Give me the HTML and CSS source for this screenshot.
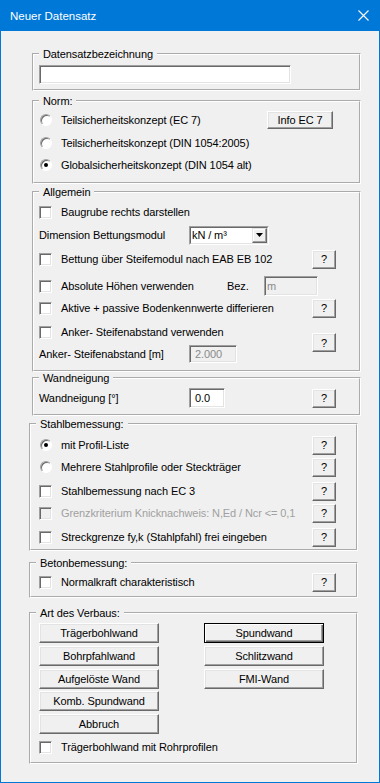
FILE: index.html
```html
<!DOCTYPE html>
<html lang="de">
<head>
<meta charset="utf-8">
<title>Neuer Datensatz</title>
<link rel="stylesheet" href="styles.css">
</head>
<body>
<div class="window">
  <div class="titlebar">
    <span class="title">Neuer Datensatz</span>
    <svg class="close" width="11" height="11" viewBox="0 0 11 11"><path d="M0.5 0.5L10.5 10.5M10.5 0.5L0.5 10.5" stroke="#fff" stroke-width="1.1" fill="none"/></svg>
  </div>
  <div class="content">
    <fieldset class="group g1">
      <legend>Datensatzbezeichnung</legend>
      <div class="input name"></div>
    </fieldset>

    <fieldset class="group g2">
      <legend>Norm:</legend>
      <div class="row h22"><span class="rb"></span><span>Teilsicherheitskonzept (EC 7)</span><button class="btn info">Info EC 7</button></div>
      <div class="row h23"><span class="rb"></span><span>Teilsicherheitskonzept (DIN 1054:2005)</span></div>
      <div class="row h22"><span class="rb on"></span><span>Globalsicherheitskonzept (DIN 1054 alt)</span></div>
    </fieldset>

    <fieldset class="group g3">
      <legend>Allgemein</legend>
      <div class="row"><span class="cb"></span><span>Baugrube rechts darstellen</span></div>
      <div class="row mt1"><span class="fixlbl">Dimension Bettungsmodul</span>
        <div class="select"><div class="select-in"><span class="sel-text">kN / m³</span><span class="arrow"><svg width="7" height="4" viewBox="0 0 7 4"><path d="M0 0H7L3.5 4Z" fill="#000"/></svg></span></div></div>
      </div>
      <div class="row mt2"><span class="cb"></span><span>Bettung über Steifemodul nach EAB EB 102</span><button class="btn q">?</button></div>
      <div class="row mt5"><span class="cb"></span><span class="lbl-abs">Absolute Höhen verwenden</span><span class="bez">Bez.</span><div class="input dis bezin">m</div></div>
      <div class="row"><span class="cb"></span><span>Aktive + passive Bodenkennwerte differieren</span><button class="btn q">?</button></div>
      <div class="anker">
        <div class="anker-rows">
          <div class="row"><span class="cb"></span><span>Anker- Steifenabstand verwenden</span></div>
          <div class="row h21"><span class="fixlbl">Anker- Steifenabstand [m]</span><div class="input dis abst">2.000</div></div>
        </div>
        <button class="btn q">?</button>
      </div>
    </fieldset>

    <fieldset class="group g4">
      <legend>Wandneigung</legend>
      <div class="row"><span class="fixlbl">Wandneigung [°]</span><div class="input neig">0.0</div><button class="btn q">?</button></div>
    </fieldset>

    <fieldset class="group shifted g5">
      <legend>Stahlbemessung:</legend>
      <div class="row"><span class="rb on"></span><span>mit Profil-Liste</span><button class="btn q">?</button></div>
      <div class="row"><span class="rb"></span><span>Mehrere Stahlprofile oder Steckträger</span><button class="btn q">?</button></div>
      <div class="row mt2"><span class="cb"></span><span>Stahlbemessung nach EC 3</span><button class="btn q">?</button></div>
      <div class="row"><span class="cb dis"></span><span class="distext">Grenzkriterium Knicknachweis: N,Ed / Ncr &lt;= 0,1</span><button class="btn q">?</button></div>
      <div class="row mt2"><span class="cb"></span><span>Streckgrenze fy,k (Stahlpfahl) frei eingeben</span><button class="btn q">?</button></div>
    </fieldset>

    <fieldset class="group shifted g6">
      <legend>Betonbemessung:</legend>
      <div class="row"><span class="cb"></span><span>Normalkraft charakteristisch</span><button class="btn q">?</button></div>
    </fieldset>

    <fieldset class="group shifted g7">
      <legend>Art des Verbaus:</legend>
      <div class="btngrid">
        <button class="btn">Trägerbohlwand</button>
        <button class="btn default">Spundwand</button>
        <button class="btn">Bohrpfahlwand</button>
        <button class="btn">Schlitzwand</button>
        <button class="btn">Aufgelöste Wand</button>
        <button class="btn">FMI-Wand</button>
        <button class="btn">Komb. Spundwand</button>
        <span></span>
        <button class="btn">Abbruch</button>
      </div>
      <div class="row mt2"><span class="cb"></span><span>Trägerbohlwand mit Rohrprofilen</span></div>
    </fieldset>
  </div>
</div>
</body>
</html>
```
FILE: styles.css
```css
html, body {
  margin: 0;
  padding: 0;
  background: #f0f0f0;
}
body {
  font-family: "Liberation Sans", Arial, sans-serif;
  font-size: 11px;
  color: #000;
}
.window {
  width: 380px;
  height: 783px;
  box-sizing: border-box;
  border: 1px solid #0078d7;
  border-top: 0;
  background: #f0f0f0;
  overflow: hidden;
}
.titlebar {
  height: 31px;
  background: #0078d7;
  display: flex;
  align-items: center;
  padding-left: 9px;
  color: #fff;
}
.title {
  font-size: 11.5px;
}
.close {
  margin-left: auto;
  margin-right: 10px;
}
.content {
  display: flex;
  flex-direction: column;
  letter-spacing: -0.1px;
}
.group {
  margin: 0 0 0 31px;
  width: 329px;
  box-sizing: border-box;
  min-width: 0;
  border: 2px groove #fff;
  padding: 0 23px 0 5px;
}
.group.shifted {
  margin-left: 28px;
  padding-left: 8px;
  padding-right: 20px;
}
legend {
  padding: 0 4px;
  line-height: 12px;
  height: 12px;
  font-size: 11px;
}
.shifted legend {
  margin-left: -3px;
}
.g1 { margin-top: 17px; padding-top: 5px; padding-bottom: 5px; }
.g2 { margin-top: 4px; padding-top: 2px; padding-bottom: 6px; }
.g3 { margin-top: 2px; padding-top: 3px; padding-bottom: 6px; }
.g4 { margin-top: 0; padding-top: 3px; padding-bottom: 5px; }
.g5 { margin-top: 2px; padding-top: 4px; padding-bottom: 1px; }
.g6 { margin-top: 6px; padding-top: 2px; padding-bottom: 3px; }
.g7 { margin-top: 9px; padding-top: 4px; padding-bottom: 4px; }

.row {
  display: flex;
  align-items: center;
  height: 22px;
  white-space: nowrap;
}
.row.h23 { height: 23px; }
.row.h21 { height: 21px; }
.mt1 { margin-top: 1px; }
.mt2 { margin-top: 2px; }
.mt5 { margin-top: 5px; }

.cb {
  flex: none;
  width: 13px;
  height: 13px;
  box-sizing: border-box;
  background: #fff;
  border: 1px solid;
  border-color: #a0a0a0 #fff #fff #a0a0a0;
  box-shadow: inset 1px 1px #696969, inset -1px -1px #e3e3e3;
  margin-right: 9px;
}
.cb.dis { background: #f0f0f0; }
.distext { color: #a0a0a0; }

.rb {
  flex: none;
  width: 12px;
  height: 12px;
  box-sizing: border-box;
  border-radius: 50%;
  margin-left: 1px;
  margin-right: 9px;
  background: #fff;
  border: 1px solid;
  border-color: #a0a0a0 #fff #fff #a0a0a0;
  box-shadow: inset 1px 1px #696969;
  display: flex;
  align-items: center;
  justify-content: center;
}
.rb.on::after {
  content: "";
  width: 4px;
  height: 4px;
  border-radius: 50%;
  background: #000;
}

.btn {
  box-sizing: border-box;
  background: #f0f0f0;
  border: 1px solid;
  border-color: #fff #696969 #696969 #fff;
  box-shadow: inset -1px -1px #a0a0a0, inset 1px 1px #e3e3e3;
  display: flex;
  align-items: center;
  justify-content: center;
  font: inherit;
  letter-spacing: inherit;
  color: #000;
  padding: 0;
  margin: 0;
}
.btn.default {
  border-color: #000;
  box-shadow: inset 1px 1px #fff, inset -1px -1px #696969, inset -2px -2px #a0a0a0;
}
.q {
  width: 24px;
  height: 19px;
  margin-left: auto;
  flex: none;
}
.info {
  width: 66px;
  height: 18px;
  margin-left: auto;
  margin-right: 3px;
}

.input {
  box-sizing: border-box;
  background: #fff;
  border: 1px solid;
  border-color: #a0a0a0 #fff #fff #a0a0a0;
  box-shadow: inset 1px 1px #696969, inset -1px -1px #e3e3e3;
  height: 19px;
  display: flex;
  align-items: center;
  padding-left: 5px;
  flex: none;
}
.input.dis {
  background: #f0f0f0;
  color: #8a8a8a;
}
.input.name {
  width: 252px;
}
.bezin {
  width: 54px;
  height: 20px;
  padding-left: 2px;
}
.abst {
  width: 48px;
  height: 18px;
}
.neig {
  width: 36px;
  height: 20px;
}

.fixlbl {
  width: 150px;
  flex: none;
}
.lbl-abs {
  width: 166px;
  flex: none;
}
.bez {
  width: 37px;
  flex: none;
}

.select {
  flex: none;
  width: 80px;
  height: 19px;
  box-sizing: border-box;
  border: 1px solid;
  border-color: #a0a0a0 #fff #fff #a0a0a0;
}
.select-in {
  height: 100%;
  box-sizing: border-box;
  border: 1px solid;
  border-color: #696969 #e3e3e3 #e3e3e3 #696969;
  background: #fff;
  display: flex;
  align-items: center;
}
.sel-text {
  padding-left: 1px;
}
.arrow {
  margin-left: auto;
  width: 15px;
  height: 100%;
  box-sizing: border-box;
  background: #f0f0f0;
  border: 1px solid;
  border-color: #e3e3e3 #696969 #696969 #e3e3e3;
  box-shadow: inset -1px -1px #a0a0a0, inset 1px 1px #fff;
  display: flex;
  align-items: center;
  justify-content: center;
}

.anker {
  display: flex;
  align-items: center;
  margin-top: 2px;
}
.anker-rows {
  flex: 1;
  display: flex;
  flex-direction: column;
}

.btngrid {
  display: grid;
  grid-template-columns: 120px 120px;
  column-gap: 45px;
  grid-auto-rows: 20px;
  row-gap: 2.75px;
}
```
